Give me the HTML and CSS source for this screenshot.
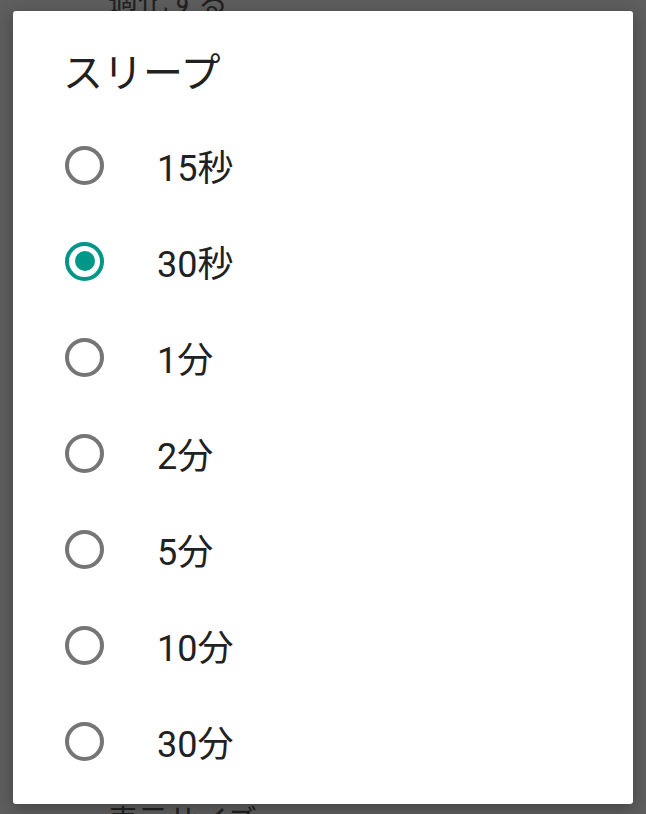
FILE: index.html
```html
<!DOCTYPE html>
<html lang="ja">
<head>
  <meta charset="UTF-8">
  <meta name="viewport" content="width=device-width, initial-scale=1.0">
  <title>スリープ</title>
  <link rel="stylesheet" href="styles.css">
</head>
<body>
  <!-- Settings screen behind the scrim -->
  <div class="screen">
    <div class="screen-text top">適化する</div>
    <div class="screen-text bottom">表示サイズ</div>
  </div>

  <!-- Sleep timeout dialog -->
  <div class="scrim">
    <div class="dialog">
      <h1 class="dialog-title">スリープ</h1>
      <ul class="options">
        <li class="option"><span class="radio"></span><span class="label">15秒</span></li>
        <li class="option checked"><span class="radio"></span><span class="label">30秒</span></li>
        <li class="option"><span class="radio"></span><span class="label">1分</span></li>
        <li class="option"><span class="radio"></span><span class="label">2分</span></li>
        <li class="option"><span class="radio"></span><span class="label">5分</span></li>
        <li class="option"><span class="radio"></span><span class="label">10分</span></li>
        <li class="option"><span class="radio"></span><span class="label">30分</span></li>
      </ul>
    </div>
  </div>
</body>
</html>
```

FILE: styles.css
```css
/* Base */
body {
  margin: 0;
  padding: 0;
  width: 646px;
  height: 814px;
  overflow: hidden;
  background-color: #5e5e5e;
  font-family: Roboto, "Noto Sans CJK JP", sans-serif;
  position: relative;
}

/* Underlying settings screen (dimmed) */
.screen {
  position: absolute;
  top: 0;
  left: 0;
  right: 0;
  bottom: 0;
}

.screen-text {
  position: absolute;
  left: 108px;
  font-family: "Noto Sans CJK JP", sans-serif;
  font-size: 30px;
  line-height: 40px;
  color: #222;
}

.screen-text.top {
  top: -21px;
}

.screen-text.bottom {
  top: 798px;
}

/* Dialog container */
.scrim {
  position: absolute;
  top: 0;
  left: 0;
  right: 0;
  bottom: 0;
  padding: 11px 13px 10px 13px;
}

.dialog {
  background-color: #fff;
  border-radius: 3px;
  height: 793px;
  box-shadow: 0 4px 16px rgba(0, 0, 0, 0.3);
  box-sizing: border-box;
  padding: 0 0 15px 0;
  display: flex;
  flex-direction: column;
}

.dialog-title {
  margin: 0;
  height: 106px;
  padding: 12px 0 0 50px;
  box-sizing: border-box;
  display: flex;
  align-items: center;
  font-family: "Noto Sans CJK JP", sans-serif;
  font-weight: normal;
  font-size: 40px;
  color: #212121;
}

/* Option list */
.options {
  list-style: none;
  margin: 0;
  padding: 0;
}

.option {
  height: 96px;
  display: flex;
  align-items: center;
  padding-left: 52px;
}

.radio {
  width: 39px;
  height: 39px;
  box-sizing: border-box;
  border: 4px solid #757575;
  border-radius: 50%;
  display: flex;
  align-items: center;
  justify-content: center;
  flex-shrink: 0;
}

.option.checked .radio {
  border-color: #009688;
}

.option.checked .radio::after {
  content: "";
  width: 20px;
  height: 20px;
  border-radius: 50%;
  background-color: #009688;
}

.label {
  margin-left: 53px;
  font-size: 36px;
  color: #212121;
}
```
